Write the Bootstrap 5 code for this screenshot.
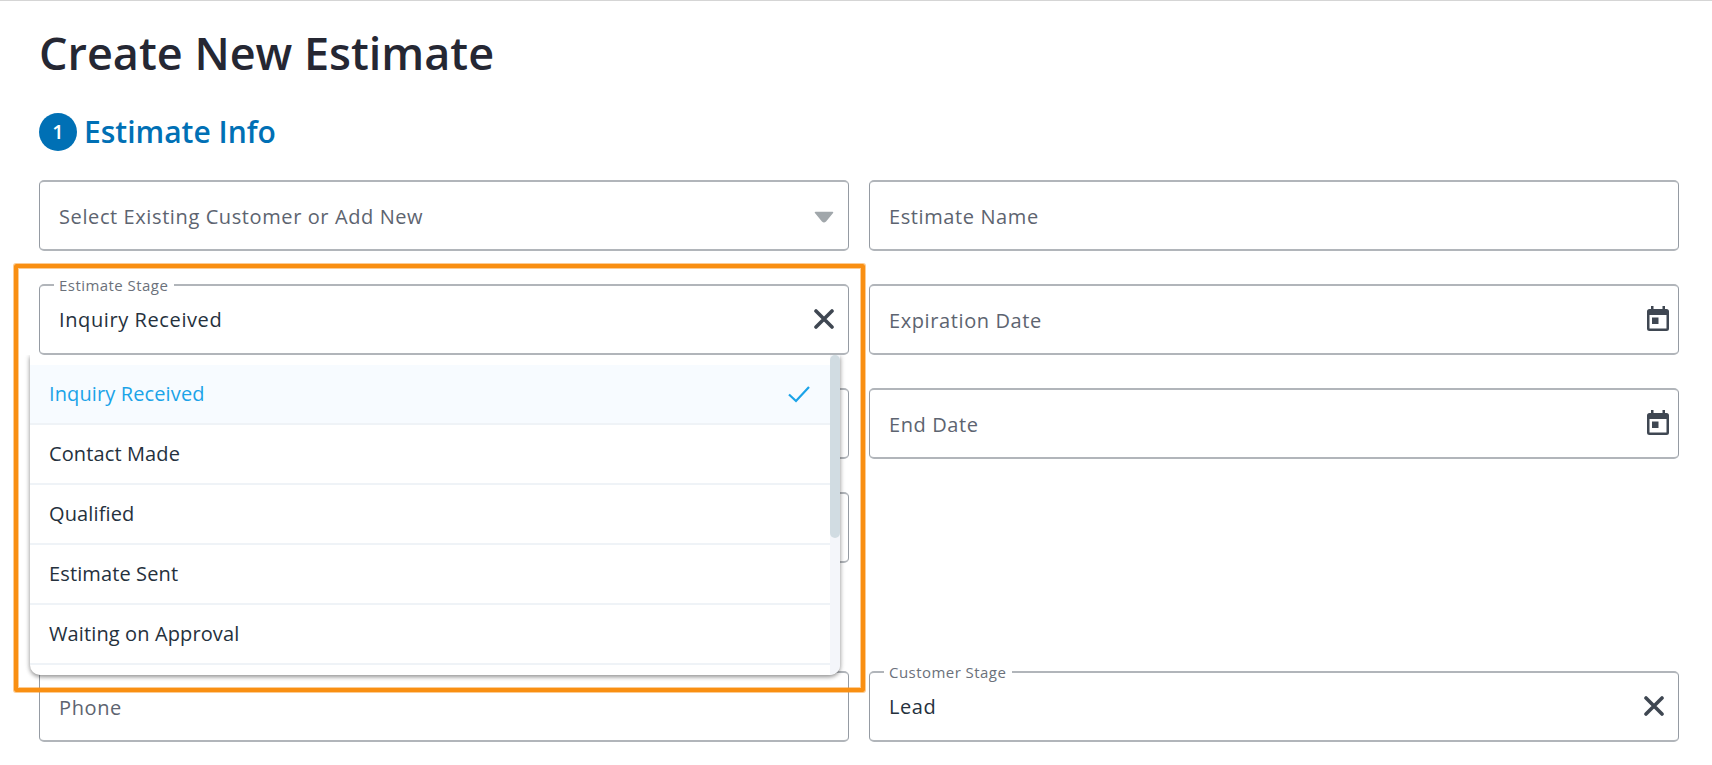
<!DOCTYPE html>
<html lang="en">
<head>
<meta charset="utf-8">
<meta name="viewport" content="width=device-width, initial-scale=1">
<title>Create New Estimate</title>
<link href="https://cdn.jsdelivr.net/npm/bootstrap@5.3.0/dist/css/bootstrap.min.css" rel="stylesheet">
<style>
body{font-family:"Open Sans",sans-serif;font-size:20px;line-height:28px;color:#25313d;height:765px;overflow:hidden;background:#fff}
.page{border-top:1px solid #d5d5d5;padding:0 33px 0 39px;height:765px}
.page-title{font-size:45px;font-weight:600;line-height:60px;color:#252733;padding-top:22px}
.section-head{margin-top:30px;height:38px;color:#0070b5;gap:7px}
.step{width:38px;height:38px;background:#0070b5;font-size:20px;font-weight:600}
.section-title{font-size:30px;font-weight:600;line-height:38px}
.form-rows{margin-top:29px}
.form-rows .row{--bs-gutter-x:20px;margin-bottom:33px}
.form-rows .row.contact-row{margin-top:108px}
.field{height:71px;border:1px solid #959ba3;border-width:2px 1px;border-top-color:#b1b5ba;border-bottom-color:#b1b5ba;border-radius:5px;padding:0 20px 0 19px;letter-spacing:.6px;color:#5d6470}
.field.filled{color:#25313d}
.ph{padding-top:2px}
.float-label{top:-14px;left:14px;padding:0 6px 0 5px;font-size:15px;line-height:26px;letter-spacing:.45px;background:#fff;color:#6b717b}
.field svg{display:block;flex:none}
.arrow{margin:2px -6px 0 0}
.clear{margin:-2px -6px 0 0}
.calendar{margin:-3px -12px 0 0}
.menu{top:71px;left:1px;width:810px;height:320px;background:#fff;border-radius:0 0 10px 10px;box-shadow:0 2px 4px rgba(0,0,0,.38),0 0 6px rgba(0,0,0,.12);z-index:5;clip-path:inset(0 -12px -12px -12px)}
.menu-list{padding-top:10px;height:320px;overflow:hidden;border-bottom-left-radius:10px}
.option{height:60px;padding:0 19px 0 19px;border-bottom:2px solid #eff3f7;letter-spacing:.12px}
.option.chosen{background:#f7fbff;color:#1ba3e8}
.track{width:10px;background:#f4f6fa;border-bottom-right-radius:10px}
.thumb{height:183px;background:#d1dce2;border-radius:5px}
.highlight{top:-20px;left:-15px;width:851px;height:428px;border:4px solid #f98f12;border-radius:2px;box-shadow:0 0 0 1px rgba(249,143,18,.45),inset 0 0 0 1px rgba(249,143,18,.45);z-index:6;pointer-events:none}
</style>
</head>
<body>
<main class="page">
  <h1 class="page-title mb-0">Create New Estimate</h1>
  <div class="section-head d-flex align-items-center">
    <span class="step rounded-circle text-white d-flex align-items-center justify-content-center">1</span>
    <h2 class="section-title mb-0">Estimate Info</h2>
  </div>
  <div class="form-rows">
    <div class="row">
      <div class="col-6"><div class="field d-flex align-items-center justify-content-between">
        <span class="ph">Select Existing Customer or Add New</span>
        <svg class="arrow" width="20" height="12" viewBox="0 0 20 12"><path d="M1.500 1.500h17L11.500 10q-1.500 1.400-3 0z" fill="#a1a7ab" stroke="#a1a7ab" stroke-width="1.500" stroke-linejoin="round"/></svg>
      </div></div>
      <div class="col-6"><div class="field d-flex align-items-center"><span class="ph">Estimate Name</span></div></div>
    </div>
    <div class="row">
      <div class="col-6 position-relative">
        <div class="field filled d-flex align-items-center justify-content-between position-relative">
          <span class="float-label position-absolute">Estimate Stage</span>
          <span class="value">Inquiry Received</span>
          <svg class="clear" width="20" height="20" viewBox="0 0 20 20"><path d="M2 2l16 16M18 2L2 18" stroke="#3f4752" stroke-width="3.600" stroke-linecap="round"/></svg>
        </div>
        <div class="menu position-absolute d-flex">
          <div class="menu-list flex-grow-1">
            <div class="option chosen d-flex align-items-center justify-content-between">Inquiry Received
              <svg width="24" height="20" viewBox="0 0 24 20"><path d="M2 10.500l7 6.500L22 3" fill="none" stroke="#1ba3e8" stroke-width="2.200"/></svg>
            </div>
            <div class="option d-flex align-items-center">Contact Made</div>
            <div class="option d-flex align-items-center">Qualified</div>
            <div class="option d-flex align-items-center">Estimate Sent</div>
            <div class="option d-flex align-items-center">Waiting on Approval</div>
          </div>
          <div class="track"><div class="thumb"></div></div>
        </div>
        <div class="highlight position-absolute"></div>
      </div>
      <div class="col-6"><div class="field d-flex align-items-center justify-content-between"><span class="ph">Expiration Date</span>
        <svg class="calendar" width="24" height="27" viewBox="0 0 24 27"><path d="M5 1h2.500v3h9V1H19v3h1.500Q23 4 23 6.500v17Q23 26 20.500 26h-17Q1 26 1 23.500v-17Q1 4 3.500 4H5z" fill="#3f4752"/><path d="M3.500 10h17v13.500h-17z" fill="#fff"/><path d="M6 12.500h6.500V19H6z" fill="#3f4752"/></svg>
      </div></div>
    </div>
    <div class="row">
      <div class="col-6"><div class="field"></div></div>
      <div class="col-6"><div class="field d-flex align-items-center justify-content-between"><span class="ph">End Date</span>
        <svg class="calendar" width="24" height="27" viewBox="0 0 24 27"><path d="M5 1h2.500v3h9V1H19v3h1.500Q23 4 23 6.500v17Q23 26 20.500 26h-17Q1 26 1 23.500v-17Q1 4 3.500 4H5z" fill="#3f4752"/><path d="M3.500 10h17v13.500h-17z" fill="#fff"/><path d="M6 12.500h6.500V19H6z" fill="#3f4752"/></svg>
      </div></div>
    </div>
    <div class="row"><div class="col-6"><div class="field"></div></div></div>
    <div class="row contact-row">
      <div class="col-6"><div class="field d-flex align-items-center"><span class="ph">Phone</span></div></div>
      <div class="col-6"><div class="field filled d-flex align-items-center justify-content-between position-relative">
        <span class="float-label position-absolute">Customer Stage</span>
        <span class="value">Lead</span>
        <svg class="clear" width="20" height="20" viewBox="0 0 20 20"><path d="M2 2l16 16M18 2L2 18" stroke="#3f4752" stroke-width="3.600" stroke-linecap="round"/></svg>
      </div></div>
    </div>
  </div>
</main>
<script src="https://cdn.jsdelivr.net/npm/bootstrap@5.3.0/dist/js/bootstrap.bundle.min.js"></script>
</body>
</html>
